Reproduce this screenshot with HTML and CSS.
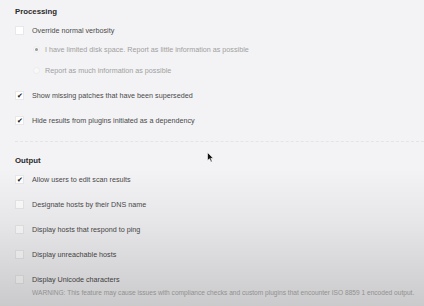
FILE: index.html
```
<html>
<head>
<title>Scan settings</title>
<link rel="stylesheet" href="styles.css">
</head>
<body>
<div class="section">
<h2>Processing</h2>
<label class="row"><span class="box"></span>Override normal verbosity</label>
<label class="row sub"><span class="radio on"></span>I have limited disk space. Report as little information as possible</label>
<label class="row sub"><span class="radio"></span>Report as much information as possible</label>
<label class="row"><span class="box checked">&#10004;</span>Show missing patches that have been superseded</label>
<label class="row"><span class="box checked">&#10004;</span>Hide results from plugins initiated as a dependency</label>
</div>
<div class="section">
<h2>Output</h2>
<label class="row"><span class="box checked">&#10004;</span>Allow users to edit scan results</label>
<label class="row"><span class="box"></span>Designate hosts by their DNS name</label>
<label class="row"><span class="box"></span>Display hosts that respond to ping</label>
<label class="row"><span class="box"></span>Display unreachable hosts</label>
<label class="row"><span class="box"></span>Display Unicode characters</label>
<p class="warn">WARNING: This feature may cause issues with compliance checks and custom plugins that encounter ISO 8859 1 encoded output.</p>
</div>
<svg class="cursor" width="7" height="11" viewBox="0 0 7 11"><path d="M0.5 0.5 L0.5 8.5 L2.5 6.8 L4 10 L5.2 9.4 L3.8 6.3 L6.3 6.3 Z" fill="#111" stroke="#fff" stroke-width="0.6"/></svg>
<div class="shade"></div>
</body>
</html>
```
FILE: styles.css
```
html {
	background: #f3f3f5;
}
body {
	margin: 0;
	height: 306px;
	padding: 0 15px;
	font-family: "Liberation Sans", Arial, sans-serif;
	font-size: 7.2px;
	color: #4a4a4a;
	overflow: hidden;
	position: relative;
}
h2 {
	margin: 0;
	height: 23px;
	line-height: 24px;
	font-size: 7.8px;
	font-weight: bold;
	color: #2a2a2a;
}
.section {
	margin-right: -15px;
	border-bottom: 1px dashed #e4e4e6;
	padding-bottom: 14px;
}
.section + .section {
	border-bottom: none;
	padding-top: 7px;
}
.row {
	display: flex;
	align-items: center;
	height: 14px;
	margin-top: 11px;
}
h2 + .row {
	margin-top: 0;
}
.row.sub {
	margin-top: 5px;
	padding-left: 18px;
	color: #a0a0a0;
}
.sub + .sub {
	margin-top: 7px;
}
.box {
	width: 9px;
	height: 9px;
	background: #fff;
	border: 1px solid #e8e8ea;
	margin-right: 8px;
	box-sizing: border-box;
	flex: none;
	font-size: 6.5px;
	line-height: 8px;
	text-align: center;
	color: #111;
}
.radio {
	width: 7px;
	height: 7px;
	border-radius: 50%;
	background: #f8f8f8;
	border: 1px solid #ececee;
	box-sizing: border-box;
	margin-right: 5px;
	position: relative;
	flex: none;
}
.radio.on::after {
	content: "";
	position: absolute;
	left: 1px;
	top: 1px;
	width: 3px;
	height: 3px;
	border-radius: 50%;
	background: #999;
}
.warn {
	margin: 3px 0 0 17px;
	line-height: 8px;
	font-size: 6.6px;
	color: #ababab;
	white-space: nowrap;
}
.cursor {
	position: absolute;
	left: 207px;
	top: 152px;
}
.shade {
	position: absolute;
	left: 0;
	right: 0;
	top: 0;
	bottom: 0;
	pointer-events: none;
	background: linear-gradient(to bottom, rgba(0,0,0,0) 55%, rgba(0,0,0,0.05) 72%, rgba(0,0,0,0.17) 100%);
}
```
